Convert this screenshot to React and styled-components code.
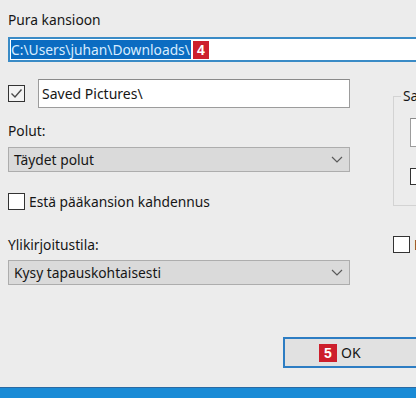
import React from 'react';
import styled, { createGlobalStyle } from 'styled-components';

const GlobalStyle = createGlobalStyle`
  html, body {
    margin: 0;
    padding: 0;
    background: #ececec;
  }
  body {
    font-family: 'Noto Sans', 'Liberation Sans', sans-serif;
    color: #161616;
  }
`;

const Page = styled.div`
  width: 416px;
  height: 398px;
  overflow: hidden;
  display: flex;
  flex-direction: column;
  background: #ececec;
  font-size: 13.8px;
`;

const Dialog = styled.div`
  flex: 1;
  display: flex;
  flex-direction: column;
  padding-left: 8px;
  min-height: 0;
`;

const Label = styled.div`
  line-height: 18px;
  margin-top: ${(p) => p.$top || 0}px;
  white-space: nowrap;
`;

const PathInput = styled.div`
  margin-top: 8px;
  height: 25px;
  width: 440px;
  box-sizing: border-box;
  border: 2px solid #3a8bc6;
  background: #fff;
  display: flex;
  align-items: center;
  padding-left: 1px;
`;

const Selection = styled.span`
  background: #0b6cc1;
  color: #d8ecff;
  height: 19px;
  line-height: 19px;
  padding-right: 1px;
  white-space: nowrap;
`;

const Badge = styled.span`
  display: inline-flex;
  align-items: center;
  justify-content: center;
  width: ${(p) => p.$w || 16}px;
  height: 18px;
  margin-left: ${(p) => p.$ml || 0}px;
  margin-right: ${(p) => p.$mr || 0}px;
  background: #cd1f2c;
  color: #fff;
  font-weight: 700;
  font-size: 14px;
  font-family: 'Liberation Sans', Arial, sans-serif;
`;

const Columns = styled.div`
  display: flex;
  margin-top: 17px;
`;

const LeftCol = styled.div`
  width: 342px;
  flex-shrink: 0;
  display: flex;
  flex-direction: column;
`;

const RightCol = styled.div`
  margin-left: 43px;
  width: 120px;
  flex-shrink: 0;
  display: flex;
  flex-direction: column;
`;

const CheckRow = styled.div`
  display: flex;
  align-items: center;
  margin-top: ${(p) => p.$top || 0}px;
  margin-left: ${(p) => p.$left || 0}px;
  white-space: nowrap;
`;

const Box = styled.span`
  width: 17px;
  height: 17px;
  box-sizing: border-box;
  border: 1px solid #333;
  background: ${(p) => (p.$checked ? '#f3f3f3' : '#fff')};
  display: inline-flex;
  align-items: center;
  justify-content: center;
  flex-shrink: 0;
  margin-right: ${(p) => p.$mr ?? 4}px;
`;

const TextBox = styled.div`
  height: 29px;
  width: ${(p) => p.$w || 312}px;
  box-sizing: border-box;
  border: 1px solid #9c9c9c;
  border-top-color: #8a8a8a;
  background: #fff;
  display: flex;
  align-items: center;
  padding-left: 3px;
  font-size: 14px;
  margin-left: ${(p) => p.$ml || 0}px;
  margin-top: ${(p) => p.$top || 0}px;
`;

const Select = styled.div`
  margin-top: ${(p) => p.$top || 0}px;
  height: 25px;
  width: 342px;
  box-sizing: border-box;
  border: 1px solid #adadad;
  background: #dadada;
  display: flex;
  align-items: center;
  justify-content: space-between;
  padding: 0 6px 0 5px;
`;

const GroupBox = styled.fieldset`
  margin: 0;
  margin-top: 8px;
  padding: 0;
  height: 119px;
  box-sizing: border-box;
  border: 1px solid #d3d3d3;
  border-right: none;
  display: flex;
  flex-direction: column;

  legend {
    padding: 0 2px;
    margin-left: 7px;
    line-height: 18px;
    white-space: nowrap;
  }
`;

const Footer = styled.div`
  margin-top: auto;
  padding-bottom: 19px;
  padding-left: 275px;
`;

const OkButton = styled.div`
  width: 160px;
  height: 31px;
  box-sizing: border-box;
  border: 2px solid #2d7dc3;
  background: #e1e1e1;
  display: flex;
  align-items: center;
  padding-left: 34px;
  font-size: 14px;
`;

const Taskbar = styled.div`
  height: 11px;
  background: #1a8bd6;
  border-top: 1px solid #2a6aa3;
  box-sizing: border-box;
`;

const Check = () => (
  <svg width="13" height="11" viewBox="0 0 13 11">
    <path d="M1.5 5.5 L5 9 L11.5 1.5" fill="none" stroke="#4a4a4a" strokeWidth="1.4" />
  </svg>
);

const Chevron = () => (
  <svg width="12" height="7" viewBox="0 0 12 7">
    <path d="M1 1 L6 6 L11 1" fill="none" stroke="#5a5a5a" strokeWidth="1.2" />
  </svg>
);

const App = () => (
  <Page>
    <GlobalStyle />
    <Dialog>
      <Label $top={11}>Pura kansioon</Label>
      <PathInput>
        <Selection>C:\Users\juhan\Downloads\</Selection>
        <Badge $ml={2}>4</Badge>
      </PathInput>
      <Columns>
        <LeftCol>
          <CheckRow>
            <Box $checked $mr={0}>
              <Check />
            </Box>
            <TextBox $ml={13}>Saved Pictures\</TextBox>
          </CheckRow>
          <Label $top={14}>Polut:</Label>
          <Select $top={7}>
            <span>Täydet polut</span>
            <Chevron />
          </Select>
          <CheckRow $top={20}>
            <Box />
            <span>Estä pääkansion kahdennus</span>
          </CheckRow>
          <Label $top={25}>Ylikirjoitustila:</Label>
          <Select $top={6}>
            <span>Kysy tapauskohtaisesti</span>
            <Chevron />
          </Select>
        </LeftCol>
        <RightCol>
          <GroupBox>
            <legend>Salasana</legend>
            <TextBox $w={100} $ml={16} $top={13} />
            <CheckRow $top={20} $left={16}>
              <Box />
              <span>Näytä</span>
            </CheckRow>
          </GroupBox>
          <CheckRow $top={29}>
            <Box />
            <span>Erota</span>
          </CheckRow>
        </RightCol>
      </Columns>
      <Footer>
        <OkButton>
          <Badge $w={18} $mr={4}>5</Badge>
          OK
        </OkButton>
      </Footer>
    </Dialog>
    <Taskbar />
  </Page>
);

export default App;
